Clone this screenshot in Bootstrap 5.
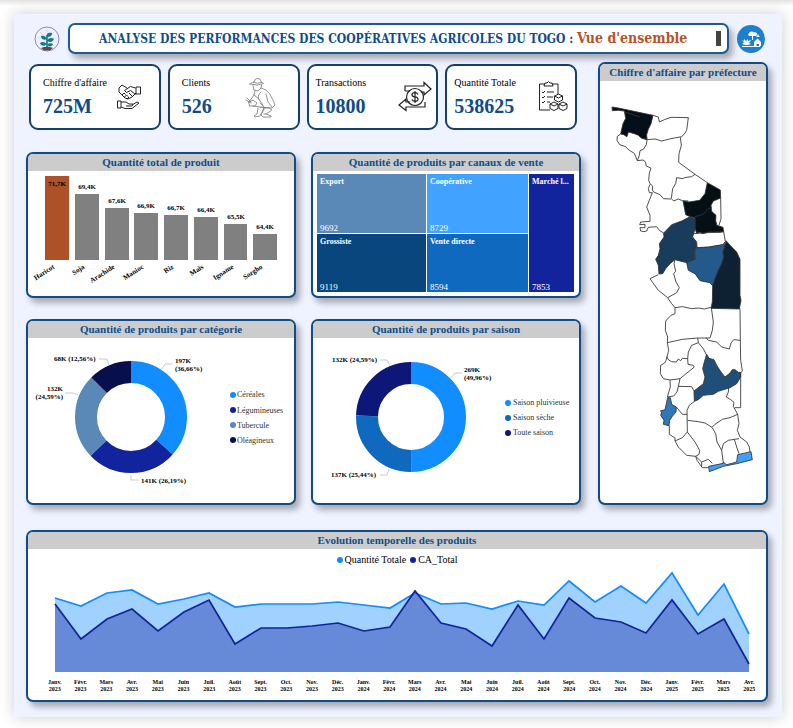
<!DOCTYPE html>
<html lang="fr">
<head>
<meta charset="utf-8">
<meta name="viewport" content="width=device-width, initial-scale=1">
<title>Analyse des performances des coopératives agricoles du Togo</title>
<link href="https://cdn.jsdelivr.net/npm/bootstrap@5.3.0/dist/css/bootstrap.min.css" rel="stylesheet">
<style>
:root{--navy:#0f4c88}
body{font-family:"Liberation Serif","Times New Roman",serif;background:linear-gradient(#e2e2e2,#fff 6px);padding:14px 11px 12px 14px;color:#000}
.board{background:#eff3ff;box-shadow:0 0 14px rgba(0,0,0,.2);padding:9px 14px 15px 12px}
.topline{padding:0 3px 0 8px;gap:8px}
.titlebar{height:31px;border:2px solid #1c5a93;border-radius:7px;box-shadow:4px 5px 6px rgba(0,0,0,.3);padding:0 6px 0 29px}
.titlebar h1{font-family:"DejaVu Serif Condensed","Liberation Serif",serif;font-size:12px;line-height:20px;font-weight:700;color:var(--navy)}
.titlebar h1 span{font-size:14px;color:#b5532b}
.thumb{width:5px;height:15px;background:#444}
.overview{display:grid;grid-template-columns:minmax(0,1fr) 170px;gap:17px;margin-top:8px}
.kpis{display:grid;grid-template-columns:repeat(4,minmax(0,1fr));gap:7px;margin:2px 4px 22px 3px}
.kpi{height:66px;border:2px solid #143f6e;border-radius:9px;padding:0 18px 0 12px}
.kpi.wide{padding:0 4px 0 7px}
.kpi-label{font-size:10px;line-height:14px}
.kpi-value{font-size:20px;line-height:24px;margin-top:4px;font-weight:700;color:var(--navy)}
.kpi svg,.emblem{flex:none;display:block}
.charts{display:grid;grid-template-columns:repeat(2,minmax(0,1fr));gap:21px 15px}
.panel{border:2px solid var(--navy);border-radius:7px;overflow:hidden;box-shadow:4px 5px 6px rgba(0,0,0,.3)}
.panel h2{font-size:11px;line-height:17px;font-weight:700;color:var(--navy);background:#ccc}
.panel svg{display:block;width:100%;height:auto}
.val{font-size:7px;font-weight:700}
.legend-row{font-size:10px;line-height:17px;padding-top:2px}
.dot{width:6px;height:6px;border-radius:50%;margin-right:2px}
.dot-qty{background:#118dff}.dot-ca{background:#12239e}
.donut g circle{fill:none}
.donut .lead-line{fill:none;stroke:#b5b5b5;stroke-width:.7}
.donut .key{font-size:8px;fill:#333}
.tree{display:grid;grid-template-columns:109fr 101fr 45fr;gap:1px;padding:3px 5px 4px 4px;height:125px;color:#fff}
.tree .stack{gap:1px;min-width:0}
.cell{padding:3px 2px 0 3px;font-size:9px;line-height:10px}
.cell b{font-size:8px}
.c-export{background:#5a88b7}.c-gros{background:#09467d}.c-coop{background:#41a3ff}.c-vente{background:#0f6abf}.c-marche{background:#12239e}
.months{display:grid;grid-template-columns:repeat(28,minmax(0,1fr));padding:7px 4px 7px 14px;font-size:6px;line-height:7px;font-weight:700;text-align:center}
.timeline{margin-top:25px}
.regions{stroke:#333;stroke-width:2.6;fill:none;stroke-linejoin:round}
</style>
</head>
<body>
<main class="board">
  <header class="topline d-flex align-items-center">
    <svg class="emblem" width="26" height="26" viewBox="0 0 26 26" role="img" aria-label="Jeune plante">
      <circle cx="13" cy="13" r="12" fill="#eef0fb" stroke="#8b87c9"/>
      <path d="M13 3v19M4 12h18M6 6l14 14M20 6L6 20" stroke="#c8d3e8" stroke-width=".6"/>
      <path d="M7 22q6-2.500 12 0l-3 2.500H10z" fill="#5c4650"/>
      <path d="M13 22V9" stroke="#146e7c" stroke-width="1.500"/>
      <path d="M13 11c-1-4 2-5 5-4 0 3-2 4-5 4zM13 13c-1-3-4-4-6-3 0 3 3 5 6 3zM13 15c1-3 4-4 7-2-1 3-4 4-7 2zM13 18c-2-2-5-3-7-1 1 3 4 4 7 1zM13 19c1-2 4-2 6-1-1 3-4 3-6 1z" fill="#137a86"/>
    </svg>
    <div class="titlebar bg-white flex-grow-1 d-flex align-items-center justify-content-between">
      <h1 class="m-0 text-nowrap">ANALYSE DES PERFORMANCES DES COOPÉRATIVES AGRICOLES DU TOGO : <span>Vue d'ensemble</span></h1>
      <div class="thumb"></div>
    </div>
    <svg class="emblem" width="28" height="28" viewBox="0 0 28 28" role="img" aria-label="Ferme">
      <circle cx="14" cy="14" r="14" fill="#1c7fd0"/>
      <path d="M12 11a2 2 0 010-3 3 3 0 015-.5 2 2 0 012 3.500h-3v4h-1v-4zM20 11l1-2 1 2 1 1h-4zM17 17l3.500-3.500L24 17v4h-2v-2h-2.500v2H17zM5 15l2 1v-2l2 2 2-2v2l3-1-2 3 2 1-3 1H8l-3-1 2-1.500zM5 21h18v1H5z" fill="#fff"/>
    </svg>
  </header>

  <div class="overview">
    <div>
      <section class="kpis">
        <div class="kpi bg-white d-flex align-items-center justify-content-between">
          <div><div class="kpi-label text-nowrap">Chiffre d'affaire</div><div class="kpi-value">725M</div></div>
          <svg width="24" height="26" viewBox="0 0 24 26" fill="none" stroke="#222" stroke-linejoin="round" aria-hidden="true">
            <path d="M19 3h4.500v7H19zM18.500 4l-5-1.500-6 4 2 2 4-2 5 4M2 4l3-3 5 3M2 4v4l6 6 3 1 4-2 4-4M5 11l2-2 1.500 1.500M7.500 13l2-2 1.500 1.500M10 15l2-2M12 9l4 4"/>
            <path d="M.5 17h3.500v7H.5zM4 18h5l3 2h4l-1 2H9M15 21l5-3 2 1-7 5.500H8L4 23"/>
          </svg>
        </div>
        <div class="kpi bg-white d-flex align-items-center justify-content-between">
          <div><div class="kpi-label">Clients</div><div class="kpi-value">526</div></div>
          <svg width="36" height="42" viewBox="-2 -2 36 42" fill="none" stroke="#777" stroke-width=".8" stroke-linecap="round" stroke-linejoin="round" aria-hidden="true">
            <path d="M4 6q3-2 4-2 1-4 3.500-3.500 3-.5 4 3.500 1 0 2 1.500-6 3-13.500.5zM7.500 4.500q4 1.500 8 0M7 7.500l1 4.500 4 1 3-3 .5-3M9 13l-1 4-5 7M15 10l5 2q4 3 7 10l2 5-3 3-11-1M15 14q-5 4-1 9l3 4M8 17l5 4M20 16l2 8 4 5M3 24l4-2 4 3-2 3-5 0zM0 22l5 3M1 20l4 4M7 28l7 1 4 1-4 8-5 1-1-1 3-2 1-6M18 30l5 0 3 2-6 4-2 0M20 36l5 2v1h-8l-2-2 3-6M14 25l5 5"/>
          </svg>
        </div>
        <div class="kpi wide bg-white d-flex align-items-center justify-content-between">
          <div><div class="kpi-label">Transactions</div><div class="kpi-value">10800</div></div>
          <svg width="34" height="32" viewBox="0 0 34 32" fill="none" stroke="#222" stroke-width="1.200" aria-hidden="true">
            <path d="M7 10V5h19V1.500L33 8l-7 6v-3h-3M27 21v5H8v3.500L1 24l7-6v3h4M7 10h5"/>
            <circle cx="17" cy="16" r="8.500"/>
            <path d="M20 13.500q-1-1.800-3-1.800-3 0-3 2t3 2.200q3 .3 3 2.400t-3 2q-2.300 0-3.200-1.800M17 10v12"/>
          </svg>
        </div>
        <div class="kpi wide bg-white d-flex align-items-center justify-content-between">
          <div><div class="kpi-label text-nowrap">Quantité Totale</div><div class="kpi-value">538625</div></div>
          <svg width="33" height="32" viewBox="0 0 33 32" fill="none" stroke="#222" stroke-linejoin="round" aria-hidden="true">
            <path d="M7 3H1.500v26H12M14 3h6v10M6 5h9l-1-3h-2q-1.500-3-3 0H7zM4 11l1 1 2-2M9 11h7M4 16l1 1 2-2M9 16h6M4 21l1 1 2-2M9 21h3"/>
            <path d="M20.500 13l4 2v4l-4 2-4-2v-4zM16.500 15l4 2 4-2M16 21l4 2v4.500l-4 2-4-2V23zM12 23l4 2 4-2M25 21l4 2v4.500l-4 2-4-2V23zM21 23l4 2 4-2"/>
          </svg>
        </div>
      </section>

      <section class="charts">
        <article class="panel bg-white">
          <h2 class="m-0 text-center">Quantité total de produit</h2>
          <svg viewBox="28 171 266 125" role="img" aria-label="Quantité par produit">
            <path d="M45 176h24v84H45z" fill="#ad5129"/>
            <path d="M75 194h24v66H75zM105 208h24v52h-24zM134 213h24v47h-24zM164 215h24v45h-24zM194 217h24v43h-24zM224 224h23v36h-23zM253 234h24v26h-24z" fill="#808080"/>
            <g class="val" text-anchor="middle">
              <text x="57" y="186">71,7K</text><text x="87" y="189">69,4K</text><text x="117" y="203">67,6K</text><text x="146" y="208">66,9K</text><text x="176" y="210">66,7K</text><text x="206" y="212">66,4K</text><text x="236" y="219">65,5K</text><text x="265" y="229">64,4K</text>
            </g>
            <g class="val" text-anchor="end">
              <text transform="translate(55 268) rotate(-33)">Haricot</text><text transform="translate(85 268) rotate(-33)">Soja</text><text transform="translate(115 268) rotate(-33)">Arachide</text><text transform="translate(144 268) rotate(-33)">Manioc</text><text transform="translate(174 268) rotate(-33)">Riz</text><text transform="translate(204 268) rotate(-33)">Maïs</text><text transform="translate(234 268) rotate(-33)">Igname</text><text transform="translate(263 268) rotate(-33)">Sorgho</text>
            </g>
          </svg>
        </article>

        <article class="panel bg-white">
          <h2 class="m-0 text-center">Quantité de produits par canaux de vente</h2>
          <div class="tree">
            <div class="stack d-flex flex-column">
              <div class="cell c-export flex-fill d-flex flex-column justify-content-between"><b>Export</b><span>9692</span></div>
              <div class="cell c-gros flex-fill d-flex flex-column justify-content-between"><b>Grossiste</b><span>9119</span></div>
            </div>
            <div class="stack d-flex flex-column">
              <div class="cell c-coop flex-fill d-flex flex-column justify-content-between"><b>Coopérative</b><span>8729</span></div>
              <div class="cell c-vente flex-fill d-flex flex-column justify-content-between"><b>Vente directe</b><span>8594</span></div>
            </div>
            <div class="stack d-flex flex-column">
              <div class="cell c-marche flex-fill d-flex flex-column justify-content-between"><b class="text-nowrap">Marché l...</b><span>7853</span></div>
            </div>
          </div>
        </article>

        <article class="panel bg-white">
          <h2 class="m-0 text-center">Quantité de produits par catégorie</h2>
          <svg class="donut" viewBox="28 338 266 165" role="img" aria-label="Répartition par catégorie">
            <g transform="rotate(-90 131 417)" stroke-width="22">
              <circle cx="131" cy="417" r="45" pathLength="100" stroke="#118dff" stroke-dasharray="36.66 100"/>
              <circle cx="131" cy="417" r="45" pathLength="100" stroke="#12239e" stroke-dasharray="26.19 100" stroke-dashoffset="-36.66"/>
              <circle cx="131" cy="417" r="45" pathLength="100" stroke="#5a88b7" stroke-dasharray="24.59 100" stroke-dashoffset="-62.85"/>
              <circle cx="131" cy="417" r="45" pathLength="100" stroke="#070f4d" stroke-dasharray="12.56 100" stroke-dashoffset="-87.44"/>
            </g>
            <path class="lead-line" d="M162 369l3-5h7M99 359h8l2 6M65 393h8l5 2M131 475v5h8"/>
            <g class="val">
              <text x="54" y="361">68K (12,56%)</text>
              <text x="175" y="363">197K</text><text x="175" y="371">(36,66%)</text>
              <text x="63" y="391" text-anchor="end">132K</text><text x="63" y="399" text-anchor="end">(24,59%)</text>
              <text x="141" y="483">141K (26,19%)</text>
            </g>
            <circle cx="233" cy="395" r="3" fill="#118dff"/><circle cx="233" cy="410" r="3" fill="#12239e"/><circle cx="233" cy="425" r="3" fill="#5a88b7"/><circle cx="233" cy="440" r="3" fill="#070f4d"/>
            <g class="key"><text x="237" y="397">Céréales</text><text x="237" y="413">Légumineuses</text><text x="237" y="428">Tubercule</text><text x="237" y="443">Oléagineux</text></g>
          </svg>
        </article>

        <article class="panel bg-white">
          <h2 class="m-0 text-center">Quantité de produits par saison</h2>
          <svg class="donut" viewBox="313 338 266 165" role="img" aria-label="Répartition par saison">
            <g transform="rotate(-90 411 417)" stroke-width="22">
              <circle cx="411" cy="417" r="44" pathLength="100" stroke="#118dff" stroke-dasharray="49.96 100"/>
              <circle cx="411" cy="417" r="44" pathLength="100" stroke="#0f6abf" stroke-dasharray="25.45 100" stroke-dashoffset="-49.96"/>
              <circle cx="411" cy="417" r="44" pathLength="100" stroke="#0d1778" stroke-dasharray="24.59 100" stroke-dashoffset="-75.41"/>
            </g>
            <path class="lead-line" d="M451 378l4-5h7M380 360h7l3 6M380 475h7l2-6"/>
            <g class="val">
              <text x="332" y="362">132K (24,59%)</text>
              <text x="464" y="372">269K</text><text x="464" y="380">(49,96%)</text>
              <text x="331" y="477">137K (25,44%)</text>
            </g>
            <circle cx="508" cy="403" r="3" fill="#118dff"/><circle cx="508" cy="418" r="3" fill="#0f6abf"/><circle cx="508" cy="433" r="3" fill="#0d1778"/>
            <g class="key"><text x="513" y="405">Saison pluivieuse</text><text x="513" y="420">Saison sèche</text><text x="513" y="435">Toute saison</text></g>
          </svg>
        </article>
      </section>
    </div>

    <article class="panel bg-white">
      <h2 class="m-0 text-center text-nowrap">Chiffre d'affaire par préfecture</h2>
      <svg viewBox="15 77 498 1260" role="img" aria-label="Carte du Togo">
        <g class="regions">
          <path fill="#050f1a" d="M51 155l19 3 104 22-6 25-8 17-5 16 1 15-16-4-10-9-12-5-18-5-4 14-10-6-9-2 3-14 4-17 8-16-4-22-18-2-18 1z"/>
          <path d="M174 180l16 5 3 15 15-7 20-7 52 1-2 15-3 23-8 12-7 7-32 6-28 7-20-6-24 2"/>
          <path d="M77 236l-10 7-1 12 8 13 18 6 6 7 10 7 10 6 9 22 6-16 2-14 11-5 8-13 2-15"/>
          <path d="M256 246l3 24-7 25-1 26 49 36 37 25"/>
          <path d="M127 316l17-2 8 6 1 11 15 8-5 14-2 22 4 10 8 7-1 12 4 6 19 8 10 12 23 1"/>
          <path d="M300 357l-10 7-22 3-4 3-19-3-3 18-9 15-2 14-2 16 7 7 14-6 12 5 18 1"/>
          <path d="M165 387l-5 13 3 12h9l-7 18-10 25 10 25v18l-28 2-3 8 16-1v10l-15 0 2 10 10 2 8-2 5-11 25-2 8 11 13 8"/>
          <path fill="#050f16" d="M337 382l39 22 1 24-22 9-7 13 2 18 13 12-1 16 4 14 18 6 2 13-12 2-34-1-16 5-10-4-9 3-5-14v-33l-15-3-13-6-3-16-5-25 18 3 32-5 16-20z"/>
          <path d="M300 484l25-7 12-15 12-5M90 170l45 15M377 428l1 62-6 20"/>
          <path fill="#193b5c" d="M285 484l15 6v30l-7 25 12 15 1 15-8 15 2 22-25 10-20-5-15-4-15 12-13 15-9 15-11 1-2-26-8-18 8-12 5-20-2-15 14-20-1-12 24-25 30-11z"/>
          <path d="M293 535l93-6 5 29-7 10-44 7-34 2"/>
          <path fill="#245a8b" d="M300 578l40-2 44-8 9-6-9 28 2 16-6 19-10 20-10 25-6 22-10-10-29-6-15-21-20-10-5-23 25-10z"/>
          <path fill="#0d2133" d="M393 556l12 14 20 20 10 22v108l3 15-5 26-85-2 4-19 1-48 7-22 10-25 10-20 6-19-2-16 9-28z"/>
          <path d="M240 613l-3 12 5 23-6 7 7 25 10 17-8 15-27 15-28-22-25-35 25-12M218 727l12 18 10 12 22-3 28 6 20-2 18 3 20-5"/>
        </g>
        <g class="regions" transform="translate(0 675)">
          <path d="M240 82v18l-12 5-16 17-1 28 7 20-1 17 23-5 22-5 46-4 37 0 7-23 3-25-6-43M435 85l1 95-20-2-8 10-5 18-23-6-15-15-25-5-7-8"/>
          <path d="M217 187l4 23-5 20-3 10-4 8-12 7-1 25 9 15 20 4 30-4 43-35-3-5-16-3-1-17-16-1-5 7-7-5-6 9-14-1-9-5-6-10M308 173l2 14-20 8-10 20-2 20M310 187l15 18 10 20"/>
          <path fill="#1f4e79" d="M335 222l7 12 15 4 8 17 13 20 12 15 15-12 7-10h8l10 8h7v14l-12 20-20 12-35 11-15 9-30 3-15 13-12 5-1-31 28-22 5-20-7-25 5-20z"/>
          <path d="M436 180l1 60 5 32-5 6v104h-17M401 322l-1 13-6 15 13 8 10 8-2 12 13 24-23 10-23 5-22 15-9 9-21-13-20-4-32-4M298 363l-15 12-7 15 1 65 23 30 14 25-2 12-10 6"/>
          <path d="M225 299l1 21-9 30 19-3 10-12 4-17 40 1 7 13M250 318l5-23M244 380l18 22h14"/>
          <path fill="#2f77b8" d="M218 352h8l4 20 14 8-1 15-11 13-8 12-2 16-17-4 2-12-10-15 3-10-4-3 14-4 4-18z"/>
          <path d="M223 436v26l17 11v9l22-10 15-17M240 482l10 18 25 25 27 3 4 12 16 22h18M351 441l11 19 4 25 14 25 5 38M380 510l5-20 15-10 18-3 14-2M428 402l4 28-5 20 8 20 20 15 8 15 2 15M418 477l7 23 7 20M302 528l18 17 0 15M320 545l20-8 12 12"/>
          <path fill="#3d9fff" d="M341 558l44-9 0-3 10 7 30-8 3-22 40-9 4 24-47 12-40 8-42 16z"/>
        </g>
      </svg>
    </article>
  </div>

  <article class="panel timeline bg-white">
    <h2 class="m-0 text-center">Evolution temporelle des produits</h2>
    <div class="legend-row d-flex justify-content-center">
      <span class="d-flex align-items-center me-1"><i class="dot dot-qty"></i>Quantité Totale</span>
      <span class="d-flex align-items-center"><i class="dot dot-ca"></i>CA_Total</span>
    </div>
    <svg viewBox="28 568 738 104" role="img" aria-label="Evolution mensuelle">
      <path fill="#a0d1ff" d="M55 672V598L81 606 107 593 132 590 158 604 184 599 209 593 235 607 261 604 287 604 312 604 338 602 364 605 390 608 415 593 441 604 466 603 492 609 518 601 544 605 569 581 595 602 621 586 646 603 672 573 698 615 724 584 749 634V672z"/>
      <path fill="#678ad8" d="M55 672V604L81 639 107 619 132 609 158 631 184 612 209 600 235 644 261 628 287 628 312 626 338 623 364 631 390 627 415 591 441 623 466 629 492 646 518 605 544 639 569 598 595 618 621 622 646 633 672 600 698 634 724 619 749 664V672z"/>
      <path fill="none" stroke="#118dff" stroke-width="1.700" d="M55 598L81 606 107 593 132 590 158 604 184 599 209 593 235 607 261 604 287 604 312 604 338 602 364 605 390 608 415 593 441 604 466 603 492 609 518 601 544 605 569 581 595 602 621 586 646 603 672 573 698 615 724 584 749 634"/>
      <path fill="none" stroke="#12239e" stroke-width="1.700" d="M55 604L81 639 107 619 132 609 158 631 184 612 209 600 235 644 261 628 287 628 312 626 338 623 364 631 390 627 415 591 441 623 466 629 492 646 518 605 544 639 569 598 595 618 621 622 646 633 672 600 698 634 724 619 749 664"/>
    </svg>
    <div class="months">
      <span>Janv.<br>2023</span><span>Févr.<br>2023</span><span>Mars<br>2023</span><span>Avr.<br>2023</span><span>Mai<br>2023</span><span>Juin<br>2023</span><span>Juil.<br>2023</span><span>Août<br>2023</span><span>Sept.<br>2023</span><span>Oct.<br>2023</span><span>Nov.<br>2023</span><span>Déc.<br>2023</span>
      <span>Janv.<br>2024</span><span>Févr.<br>2024</span><span>Mars<br>2024</span><span>Avr.<br>2024</span><span>Mai<br>2024</span><span>Juin<br>2024</span><span>Juil.<br>2024</span><span>Août<br>2024</span><span>Sept.<br>2024</span><span>Oct.<br>2024</span><span>Nov.<br>2024</span><span>Déc.<br>2024</span>
      <span>Janv.<br>2025</span><span>Févr.<br>2025</span><span>Mars<br>2025</span><span>Avr.<br>2025</span>
    </div>
  </article>
</main>
<script src="https://cdn.jsdelivr.net/npm/bootstrap@5.3.0/dist/js/bootstrap.bundle.min.js"></script>
</body>
</html>
